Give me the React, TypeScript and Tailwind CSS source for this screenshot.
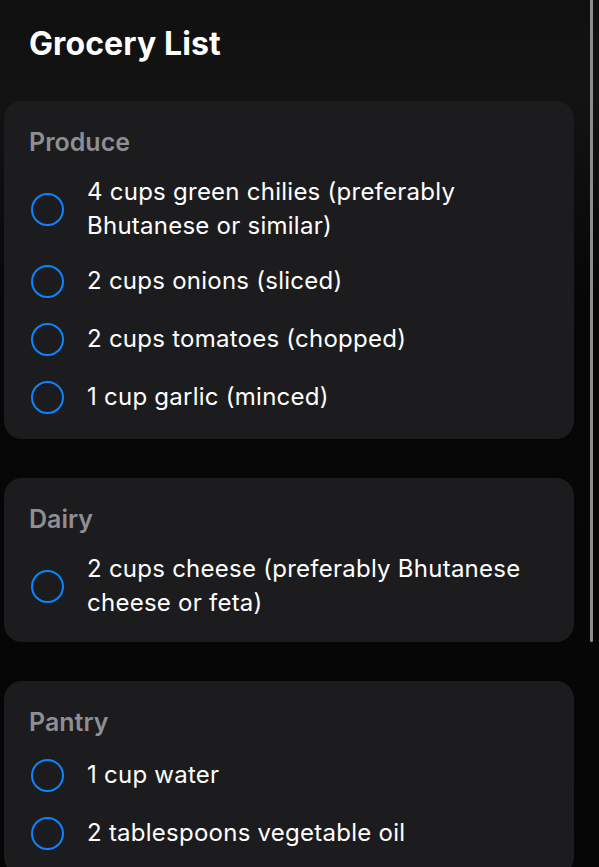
import React from 'react';

interface Section {
  name: string;
  items: string[];
}

const sections: Section[] = [
  {
    name: 'Produce',
    items: [
      '4 cups green chilies (preferably Bhutanese or similar)',
      '2 cups onions (sliced)',
      '2 cups tomatoes (chopped)',
      '1 cup garlic (minced)',
    ],
  },
  {
    name: 'Dairy',
    items: ['2 cups cheese (preferably Bhutanese cheese or feta)'],
  },
  {
    name: 'Pantry',
    items: ['1 cup water', '2 tablespoons vegetable oil'],
  },
];

const Row: React.FC<{ text: string }> = ({ text }) => (
  <div className="flex min-h-[40px] items-center">
    <div className="ml-[2px] h-[33px] w-[33px] shrink-0 rounded-full border-[2.5px] border-[#0a84ff]" />
    <span className="ml-[23px] text-[24px] leading-[34px] tracking-[0.25px] text-white">{text}</span>
  </div>
);

const Card: React.FC<{ section: Section }> = ({ section }) => (
  <div className="flex flex-col gap-[18px] rounded-[18px] bg-[#1c1c1e] pb-[22px] pl-[25px] pr-[30px] pt-[26px]">
    <div className="text-[25px] font-semibold leading-[30px] text-[#8e8e93]">{section.name}</div>
    {section.items.map((item) => (
      <Row key={item} text={item} />
    ))}
  </div>
);

export default function App() {
  return (
    <div
      className="relative h-[867px] w-full overflow-hidden bg-[linear-gradient(to_bottom,#101010_0px,#131313_95px,#070707_300px,#050505_867px)]"
      style={{ fontFamily: 'Inter, "Noto Sans", sans-serif' }}
    >
      <div className="flex w-[574px] flex-col gap-[39px] pl-[4px] pt-[26px]">
        <h1 className="pl-[25px] text-[32px] font-bold leading-[36px] tracking-[0.1px] text-white">Grocery List</h1>
        {sections.map((s) => (
          <Card key={s.name} section={s} />
        ))}
      </div>
      <div className="absolute right-[6px] top-0 h-[642px] w-[3px] rounded-b-full bg-[#8c8c8c]" />
    </div>
  );
}
